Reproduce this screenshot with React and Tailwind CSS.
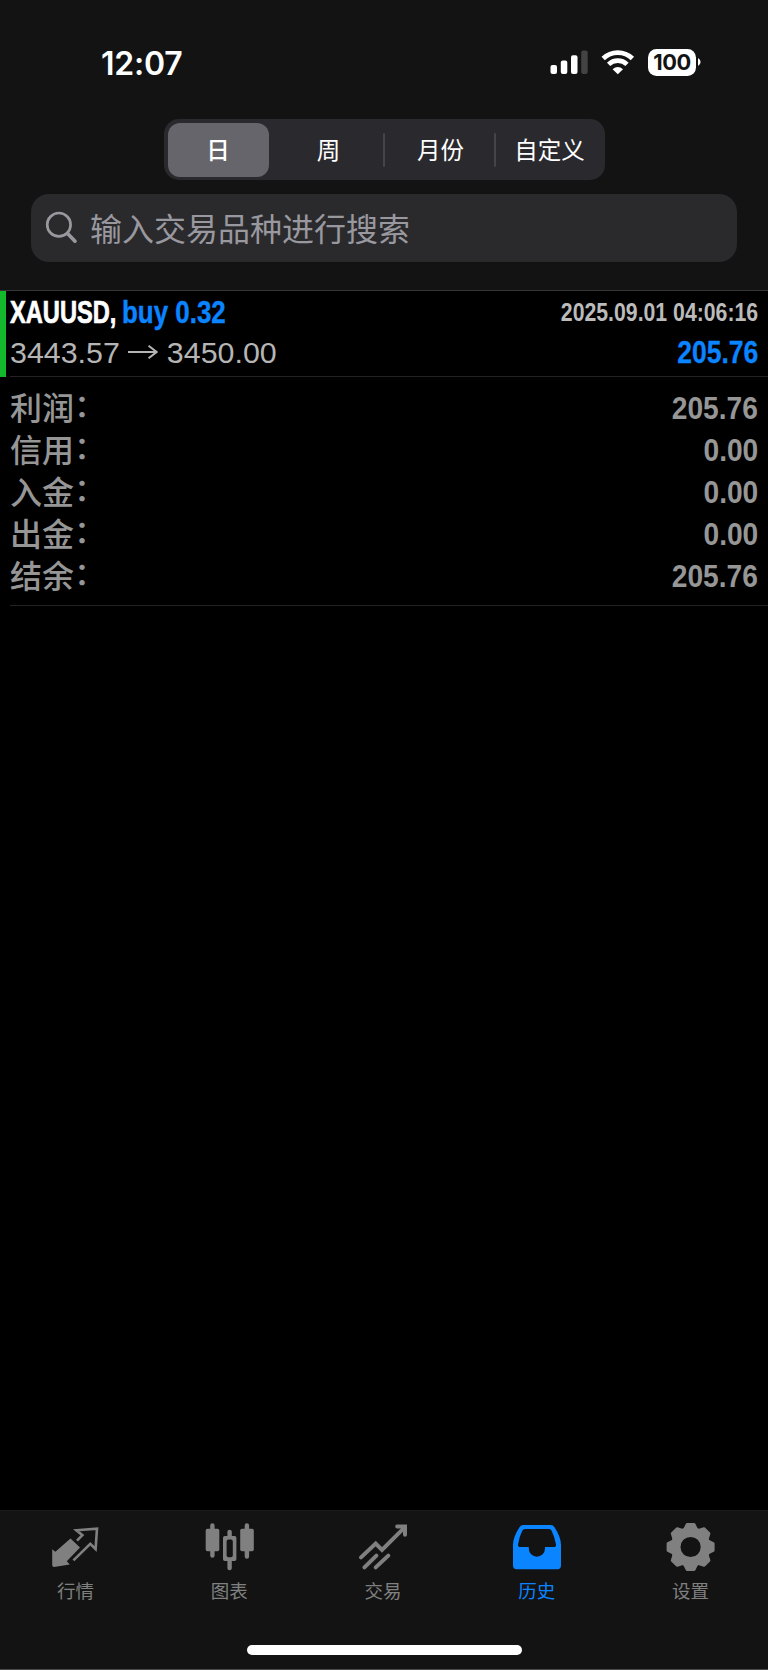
const CJK = "font-['Noto_Sans_CJK_SC',sans-serif]";
const BOLD = "font-['Liberation_Sans','Noto_Sans_CJK_SC',sans-serif] font-bold whitespace-nowrap";

function StatusBar() {
  return (
    <div className="flex h-[119px] items-start justify-between pl-[101px] pr-[67px]">
      <div className="mt-[43px] font-['Inter',sans-serif] text-[32px] leading-[41px] font-semibold tracking-[-0.2px] text-white">12:07</div>
      <div className="mt-[48px] flex items-center">
        <svg width="40" height="28" viewBox="550 48 40 28" fill="#fff">
          <rect x="550.5" y="65" width="6.5" height="9" rx="2" />
          <rect x="560.8" y="60.5" width="6.5" height="13.5" rx="2" />
          <rect x="571" y="55.2" width="6.5" height="18.8" rx="2" />
          <rect x="581.2" y="50.5" width="6.5" height="23.5" rx="2" fill="#434343" />
        </svg>
        <svg className="ml-[10px]" width="36" height="28" viewBox="600 48 36 28" fill="none" stroke="#fff">
          <path d="M603.2 58.6A21 21 0 0 1 632.4 58.6" strokeWidth="4.8" />
          <path d="M608.6 64.4A13.2 13.2 0 0 1 627 64.4" strokeWidth="4.6" />
          <path d="M612.6 69.2Q617.8 65 623 69.2L617.8 74.2Z" fill="#fff" stroke="none" />
        </svg>
        <div className="ml-[12px] flex h-[27px] w-[48px] items-center justify-center rounded-[8.5px] bg-white font-['Inter',sans-serif] text-[21.8px] leading-[27px] font-bold tracking-[-0.4px] text-[#131313]">100</div>
        <svg className="ml-[2px]" width="3" height="8" viewBox="0 0 3 8" fill="#fff">
          <path d="M0 0Q2.6 1.5 2.6 4T0 8Z" />
        </svg>
      </div>
    </div>
  );
}

function Segments() {
  return (
    <div className="ml-[164px] flex h-[61px] w-[441px] items-center rounded-[15px] bg-[#2a2a2e] pl-[4px] text-[23.5px] leading-[34px] text-white">
      <div className="flex h-[54px] w-[101px] items-center justify-center rounded-[12px] bg-[#66656b] pr-px pb-[2px] font-medium">日</div>
      <div className="flex w-[114px] justify-center pb-[2px] pl-[5px]">周</div>
      <div className="h-[34px] w-[2px] rounded-full bg-[#454549]" />
      <div className="flex w-[109px] justify-center pb-[2px] pl-[2px]">月份</div>
      <div className="h-[34px] w-[2px] rounded-full bg-[#454549]" />
      <div className="flex flex-1 justify-center pr-[2px] pb-[2px]">自定义</div>
    </div>
  );
}

function SearchField() {
  return (
    <div className="mx-[31px] mt-[14px] flex h-[68px] items-center rounded-[18px] bg-[#2a2a2d] pl-[14px] text-[#99989f]">
      <svg width="34" height="34" viewBox="45 211 34 34" fill="none" stroke="currentColor" strokeLinecap="round">
        <circle cx="58.9" cy="224.7" r="11.7" strokeWidth="2.7" />
        <path d="M67.6 233.5L75 241.2" strokeWidth="3.6" />
      </svg>
      <span className="ml-[11px] pb-[2px] text-[32px] leading-[40px]">输入交易品种进行搜索</span>
    </div>
  );
}

function Deal() {
  return (
    <div className="flex h-[86px]">
      <div className="w-[6px] bg-[#14b82c]" />
      <div className={`ml-[4px] flex-1 border-b border-[#232323] pr-[10px] ${BOLD}`}>
        <div className="flex h-[42px] items-center justify-between">
          <div className="flex text-[30.5px] leading-[42px]">
            <span className="w-[112px] text-white">
              <span className="inline-block origin-left scale-x-[0.775] [-webkit-text-stroke:0.7px_currentColor]">XAUUSD,</span>
            </span>
            <span className="w-[110px] text-[#0a84ff]">
              <span className="inline-block origin-left scale-x-[0.85] [-webkit-text-stroke:0.4px_currentColor]">buy 0.32</span>
            </span>
          </div>
          <div className="origin-right scale-x-[0.85] text-[25px] leading-[42px] text-[#bbbbbb]">2025.09.01 04:06:16</div>
        </div>
        <div className="flex h-[38px] items-center justify-between">
          <div className="flex items-center text-[30.4px] leading-[38px] font-normal text-[#b5b5b5]">
            <span>3443.57</span>
            <svg className="mr-[9px] ml-[8px]" width="30" height="16" viewBox="0 0 30 16" fill="none" stroke="currentColor" strokeWidth="2">
              <path d="M0 8H28.4M20.6 1.8L28.6 8L20.6 14.2" />
            </svg>
            <span>3450.00</span>
          </div>
          <div className="origin-right scale-x-[0.87] text-[30.5px] leading-[38px] text-[#0a84ff] [-webkit-text-stroke:0.3px_currentColor]">205.76</div>
        </div>
      </div>
    </div>
  );
}

const SUMMARY = [
  ["利润", "205.76"],
  ["信用", "0.00"],
  ["入金", "0.00"],
  ["出金", "0.00"],
  ["结余", "205.76"],
];

function Summary() {
  return (
    <div className="ml-[10px] h-[229px] border-b border-[#232323] pt-[10px] pr-[10px] text-[#969696]">
      {SUMMARY.map(([label, value]) => (
        <div key={label} className="flex h-[42px] items-center justify-between">
          <span className="flex pb-[3px] text-[32px] leading-[39px] font-medium">
            {label}
            <span className="pb-[2px] leading-[33px]">：</span>
          </span>
          <span className={`origin-right scale-x-[0.88] text-[32px] leading-[36px] ${BOLD}`}>{value}</span>
        </div>
      ))}
    </div>
  );
}

function QuotesIcon() {
  return (
    <svg width="50" height="50" viewBox="51 1522 50 50" fill="none">
      <path d="M52.2 1549.2L55.4 1551.8L70.5 1538.4L80 1547.6L66.8 1561.2L69.8 1564.6L54 1567Q52.2 1567 52.2 1565Z" fill="#808080" />
      <path d="M77 1540.6L82.4 1535.2L76.3 1530.2L97 1528.6L95.6 1549L90.3 1543.8L73.4 1560.4" stroke="#808080" strokeWidth="2.6" />
    </svg>
  );
}

function ChartIcon() {
  return (
    <svg width="50" height="50" viewBox="205 1522 50 50" fill="#808080">
      <rect x="205.7" y="1528.7" width="13.6" height="22.6" rx="1.8" />
      <rect x="210.2" y="1523.3" width="4.4" height="34.5" rx="2.2" />
      <rect x="240.2" y="1528.7" width="13.6" height="22.6" rx="1.8" />
      <rect x="244.7" y="1523.3" width="4.4" height="35.5" rx="2.2" />
      <rect x="227.4" y="1529.8" width="4.4" height="8" rx="2.2" />
      <rect x="227.4" y="1558" width="4.4" height="12.3" rx="2.2" />
      <path fillRule="evenodd" d="M224.8 1536H234.6Q236.4 1536 236.4 1537.8V1559.2Q236.4 1561 234.6 1561H224.8Q223 1561 223 1559.2V1537.8Q223 1536 224.8 1536ZM228.4 1539.6Q226.6 1539.6 226.6 1541.4V1555.4Q226.6 1557.2 228.4 1557.2H231Q232.8 1557.2 232.8 1555.4V1541.4Q232.8 1539.6 231 1539.6Z" />
    </svg>
  );
}

function TradeIcon() {
  return (
    <svg width="50" height="50" viewBox="358 1522 50 50" fill="none" stroke="#808080" strokeWidth="4" strokeLinecap="round" strokeLinejoin="round">
      <path d="M361 1557.4L375.7 1543.6L382 1550L404.6 1527.4" strokeLinejoin="miter" />
      <path d="M397.2 1526.6H405V1534.8" strokeLinejoin="miter" />
      <path d="M364.4 1567.4L376.4 1555.6M375.7 1567.4L388.3 1555.6" />
    </svg>
  );
}

function HistoryIcon() {
  return (
    <svg width="50" height="50" viewBox="512 1522 50 50" fill="#0a84ff">
      <path fillRule="evenodd" d="M523.5 1525H550.5Q553.3 1525 554.7 1527.4C558.6 1533.4 561 1539.4 561 1545V1565.6Q561 1569.2 557.4 1569.2H516.6Q513 1569.2 513 1565.6V1545C513 1539.4 515.4 1533.4 519.3 1527.4Q520.7 1525 523.5 1525ZM525 1529Q523.3 1529 522.4 1530.6Q519.4 1536.4 518.1 1544.2Q517.8 1547 520 1547H528.8V1548.5A8.1 8.3 0 0 0 545 1548.5V1547H554Q556.3 1547 556 1544.2Q554.3 1536.4 551.5 1530.6Q550.7 1529 549 1529Z" />
    </svg>
  );
}

function SettingsIcon() {
  return (
    <svg width="50" height="50" viewBox="-24.6 -25 50 50" fill="none" stroke="#808080">
      <circle r="15" strokeWidth="9.8" />
      <g fill="#808080" strokeWidth="3" strokeLinejoin="round">
        {[0, 45, 90, 135, 180, 225, 270, 315].map((a) => (
          <path key={a} d="M-6 -17.4L-3.4 -22.5H3.4L6 -17.4Z" transform={`rotate(${a})`} />
        ))}
      </g>
    </svg>
  );
}

const TABS = [
  ["行情", QuotesIcon],
  ["图表", ChartIcon],
  ["交易", TradeIcon],
  ["历史", HistoryIcon],
  ["设置", SettingsIcon],
];

function TabBar() {
  return (
    <div className="flex h-[160px] flex-col items-center border-b border-[#4a4a4a] bg-[#131313]">
      <div className="flex h-[135px] w-[770px] border-t border-[#1a1a1a] pt-[11px] pr-[1px]">
        {TABS.map(([label, Icon]) => (
          <div key={label} className="flex flex-1 flex-col items-center">
            <Icon />
            <span className={`mt-[5px] pr-px text-[18.5px] leading-[27px] ${label === "历史" ? "text-[#0a84ff]" : "text-[#808080]"}`}>{label}</span>
          </div>
        ))}
      </div>
      <div className="h-[10px] w-[275px] rounded-full bg-white" />
    </div>
  );
}

export default function App() {
  return (
    <div className={`flex h-[1670px] w-[768px] flex-col overflow-hidden bg-black ${CJK}`}>
      <header className="h-[291px] border-b border-[#353535] bg-[#131313]">
        <StatusBar />
        <Segments />
        <SearchField />
      </header>
      <main className="flex-1">
        <Deal />
        <Summary />
      </main>
      <TabBar />
    </div>
  );
}
